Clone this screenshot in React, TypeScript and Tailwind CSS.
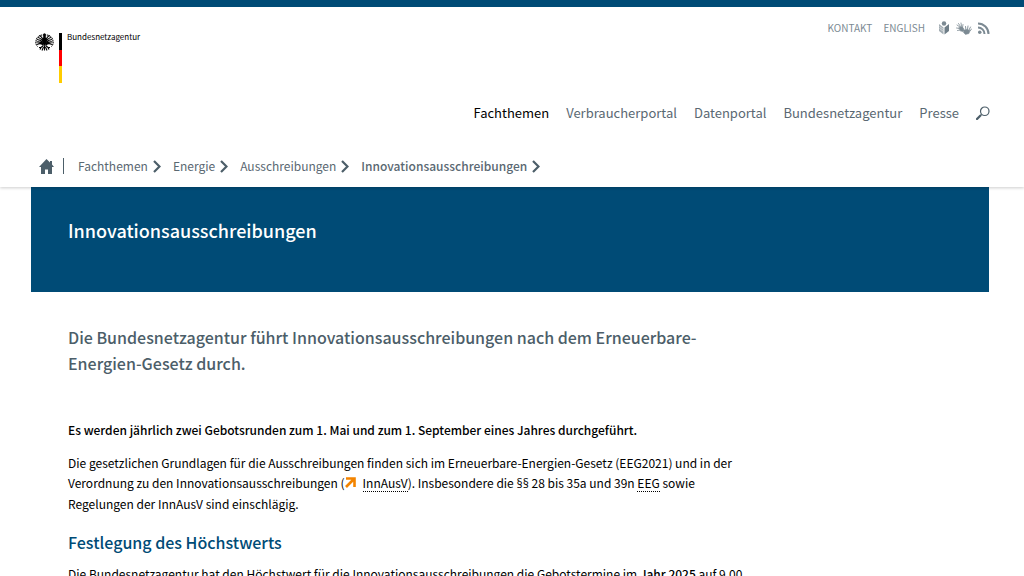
import type { ReactNode } from "react";

interface NavItem {
  label: string;
  active?: boolean;
}

const mainNav: NavItem[] = [
  { label: "Fachthemen", active: true },
  { label: "Verbraucherportal" },
  { label: "Datenportal" },
  { label: "Bundesnetzagentur" },
  { label: "Presse" },
];

const breadcrumbs: NavItem[] = [
  { label: "Fachthemen" },
  { label: "Energie" },
  { label: "Ausschreibungen" },
  { label: "Innovationsausschreibungen", active: true },
];

function EagleIcon() {
  return (
    <svg width="19" height="18" viewBox="0 0 38 36" fill="none" stroke="#000" aria-hidden="true">
      <path d="M16 3l3-2 3 2-1 5 2 5-1 9-3 4-3-4-1-9 2-5z" fill="#000" />
      <path d="M14 4C7 5 3 9 2 16c-1 4 0 8 3 11M24 4c7 1 11 5 12 12 1 4 0 8-3 11" strokeWidth="2" strokeDasharray="3 1" />
      <path d="M16 13C14 9 12 6 9 5M16 16C12 12 9 9 6 9M16 19C12 15 8 13 4 13M16 22C12 18 8 17 3 18M16 24C13 21 8 21 4 23" strokeWidth="2.4" />
      <path d="M22 13C24 9 26 6 29 5M22 16C26 12 29 9 32 9M22 19C26 15 30 13 34 13M22 22C26 18 30 17 35 18M22 24C25 21 30 21 34 23" strokeWidth="2.4" />
      <path d="M17 25l-5 4-4 0M12 29l-2 4M21 25l5 4 4 0M26 29l2 4" strokeWidth="2.4" />
      <path d="M19 26v9M17 28l-3 7M21 28l3 7" strokeWidth="2.2" />
    </svg>
  );
}

function ReadingIcon() {
  return (
    <svg width="12" height="14" viewBox="0 0 24 28" aria-hidden="true">
      <path d="M2 6l9 7v14L2 20z" fill="#a3adb3" />
      <path d="M22 6l-9 7v14l9-7z" fill="#6f7e88" />
      <circle cx="12" cy="5" r="4.5" fill="#7c8a93" />
      <path d="M3 11l8 6M3 15l8 6" stroke="#fff" strokeWidth="1" />
    </svg>
  );
}

function SignLanguageIcon() {
  return (
    <svg width="16" height="13" viewBox="0 0 32 26" fill="none" stroke="#7c8a93" strokeLinecap="round" aria-hidden="true">
      <path d="M6 11l6-2 4 5-2 5-5-1z" fill="#7c8a93" strokeWidth="1" />
      <path d="M8 10L2 6M9 9L5 3M11 8l-1-6M13 11l1-6M7 13l-6-1M8 16l-5 1" strokeWidth="1.6" />
      <path d="M16 16l6-1 6 2-2 6-7 2-4-4z" fill="#7c8a93" strokeWidth="1" />
      <path d="M20 16l-1-7M23 15l1-7M26 16l3-6M28 18l3-4M17 19l-4-3" strokeWidth="1.8" />
    </svg>
  );
}

function FeedIcon() {
  return (
    <svg width="12" height="12" viewBox="0 0 24 24" fill="none" stroke="#7c8a93" strokeWidth="4" aria-hidden="true">
      <circle cx="3.5" cy="20.5" r="3.5" fill="#7c8a93" stroke="none" />
      <path d="M0 11a13 13 0 0 1 13 13M0 3a21 21 0 0 1 21 21" />
    </svg>
  );
}

function SearchIcon() {
  return (
    <svg width="14" height="14" viewBox="0 0 28 28" fill="none" stroke="#4c5e69" aria-hidden="true">
      <circle cx="17.5" cy="10.5" r="8.5" strokeWidth="2.4" />
      <path d="M11 17l-3 3" strokeWidth="2.4" />
      <path d="M8.5 19.5L2 26" strokeWidth="4.5" strokeLinecap="round" />
    </svg>
  );
}

function HomeIcon() {
  return (
    <svg width="15" height="15" viewBox="0 0 15 15" fill="#4c5e69" aria-hidden="true">
      <path d="M7.5 0L11 3.500V2h2v3.500L15 8h-2v7H9v-4.500H6V15H2V8H0z" />
    </svg>
  );
}

function ChevronIcon() {
  return (
    <svg width="8" height="13" viewBox="0 0 8 13" fill="none" stroke="#4c5e69" strokeWidth="2.2" aria-hidden="true">
      <path d="M1 1l5.5 5.5L1 12" />
    </svg>
  );
}

function ExternalIcon() {
  return (
    <svg className="mr-[7px] inline-block align-baseline" width="11" height="11" viewBox="0 0 11 11" fill="none" stroke="#f38400" aria-hidden="true">
      <path d="M1 1.5h8.5V10M9 2L1 10" strokeWidth="2.6" />
    </svg>
  );
}

function MetaLink({ label, children }: { label: string; children: ReactNode }) {
  return (
    <a href="#" aria-label={label}>
      {children}
    </a>
  );
}

function Header() {
  return (
    <header className="relative border-t-[7px] border-[#004b76] bg-white pr-[34px] pb-[11px] pl-[35px] shadow-[0_1px_3px_rgba(0,0,0,0.2)]">
      <div className="flex items-start justify-between">
        <a href="#" className="flex items-start pt-[26px] text-black">
          <EagleIcon />
          <span className="mx-[5px] flex h-[50px] w-[3px] flex-col">
            <span className="flex-1 bg-black" />
            <span className="flex-1 bg-[#ff0000]" />
            <span className="flex-1 bg-[#ffcc00]" />
          </span>
          <span className="text-[8px] leading-[8px]">Bundesnetzagentur</span>
        </a>
        <div className="flex items-center gap-[11px] pt-3 text-[10px] leading-[18px] text-[#7c8a93]">
          <a href="#">KONTAKT</a>
          <a href="#">ENGLISH</a>
          <span className="ml-[2px] flex items-center gap-[6px]">
            <MetaLink label="Leichte Sprache"><ReadingIcon /></MetaLink>
            <MetaLink label="Gebärdensprache"><SignLanguageIcon /></MetaLink>
            <MetaLink label="RSS"><FeedIcon /></MetaLink>
          </span>
        </div>
      </div>

      <nav className="mt-5 flex items-center justify-end gap-[17px] text-[13px] leading-5" aria-label="Hauptmenü">
        {mainNav.map((item) => (
          <a key={item.label} href="#" className={item.active ? "text-black" : "text-[#5a6872]"}>
            {item.label}
          </a>
        ))}
        <button type="button" aria-label="Suche">
          <SearchIcon />
        </button>
      </nav>

      <nav className="mt-[33px] flex items-center pl-1 text-[12px] leading-5 text-[#5a6872]" aria-label="Brotkrumen">
        <a href="#" aria-label="Startseite" className="mr-[9px]">
          <HomeIcon />
        </a>
        <span className="mr-[14px] h-4 w-px bg-[#4c5e69]" />
        <ol className="flex items-center gap-3">
          {breadcrumbs.map((item) => (
            <li key={item.label} className="flex items-center gap-[5px]">
              <a href="#" className={item.active ? "font-medium" : ""}>
                {item.label}
              </a>
              <ChevronIcon />
            </li>
          ))}
        </ol>
      </nav>
    </header>
  );
}

export default function App() {
  return (
    <div className="min-h-screen bg-white font-['Noto_Sans_CJK_SC','Open_Sans',sans-serif]">
      <Header />
      <main className="pr-[35px] pl-[31px]">
        <div className="bg-[#004b76] px-[37px] pt-[29px] pb-12">
          <h1 className="text-[18px] leading-7 font-medium text-white">Innovationsausschreibungen</h1>
        </div>

        <div className="max-w-[716px] pt-8 pl-[37px] text-[12px] leading-5 text-black">
          <p className="text-[16px] leading-[26px] font-medium text-[#4c5e69]">
            Die Bundesnetzagentur führt Innovationsausschreibungen nach dem Erneuerbare-Energien-Gesetz durch.
          </p>
          <p className="mt-11 font-medium">
            Es werden jährlich zwei Gebotsrunden zum 1. Mai und zum 1. September eines Jahres durchgeführt.
          </p>
          <p className="mt-[13px]">
            Die gesetzlichen Grundlagen für die Ausschreibungen finden sich im Erneuerbare-Energien-Gesetz (EEG2021)
            und in der Verordnung zu den Innovationsausschreibungen (
            <a href="#">
              <ExternalIcon />
              <abbr className="border-b border-dotted border-black no-underline">InnAusV</abbr>
            </a>
            ). Insbesondere die <span className="font-['Open_Sans',sans-serif]">§§</span> 28 bis 35a und 39n{" "}
            <abbr className="border-b border-dotted border-black no-underline">EEG</abbr> sowie Regelungen der InnAusV
            sind einschlägig.
          </p>
          <h2 className="mt-[14px] text-[16px] leading-7 font-medium text-[#004b76]">Festlegung des Höchstwerts</h2>
          <p className="mt-2">
            Die Bundesnetzagentur hat den Höchstwert für die Innovationsausschreibungen die Gebotstermine im{" "}
            <strong className="font-medium">Jahr 2025</strong> auf 9,00
          </p>
        </div>
      </main>
    </div>
  );
}
